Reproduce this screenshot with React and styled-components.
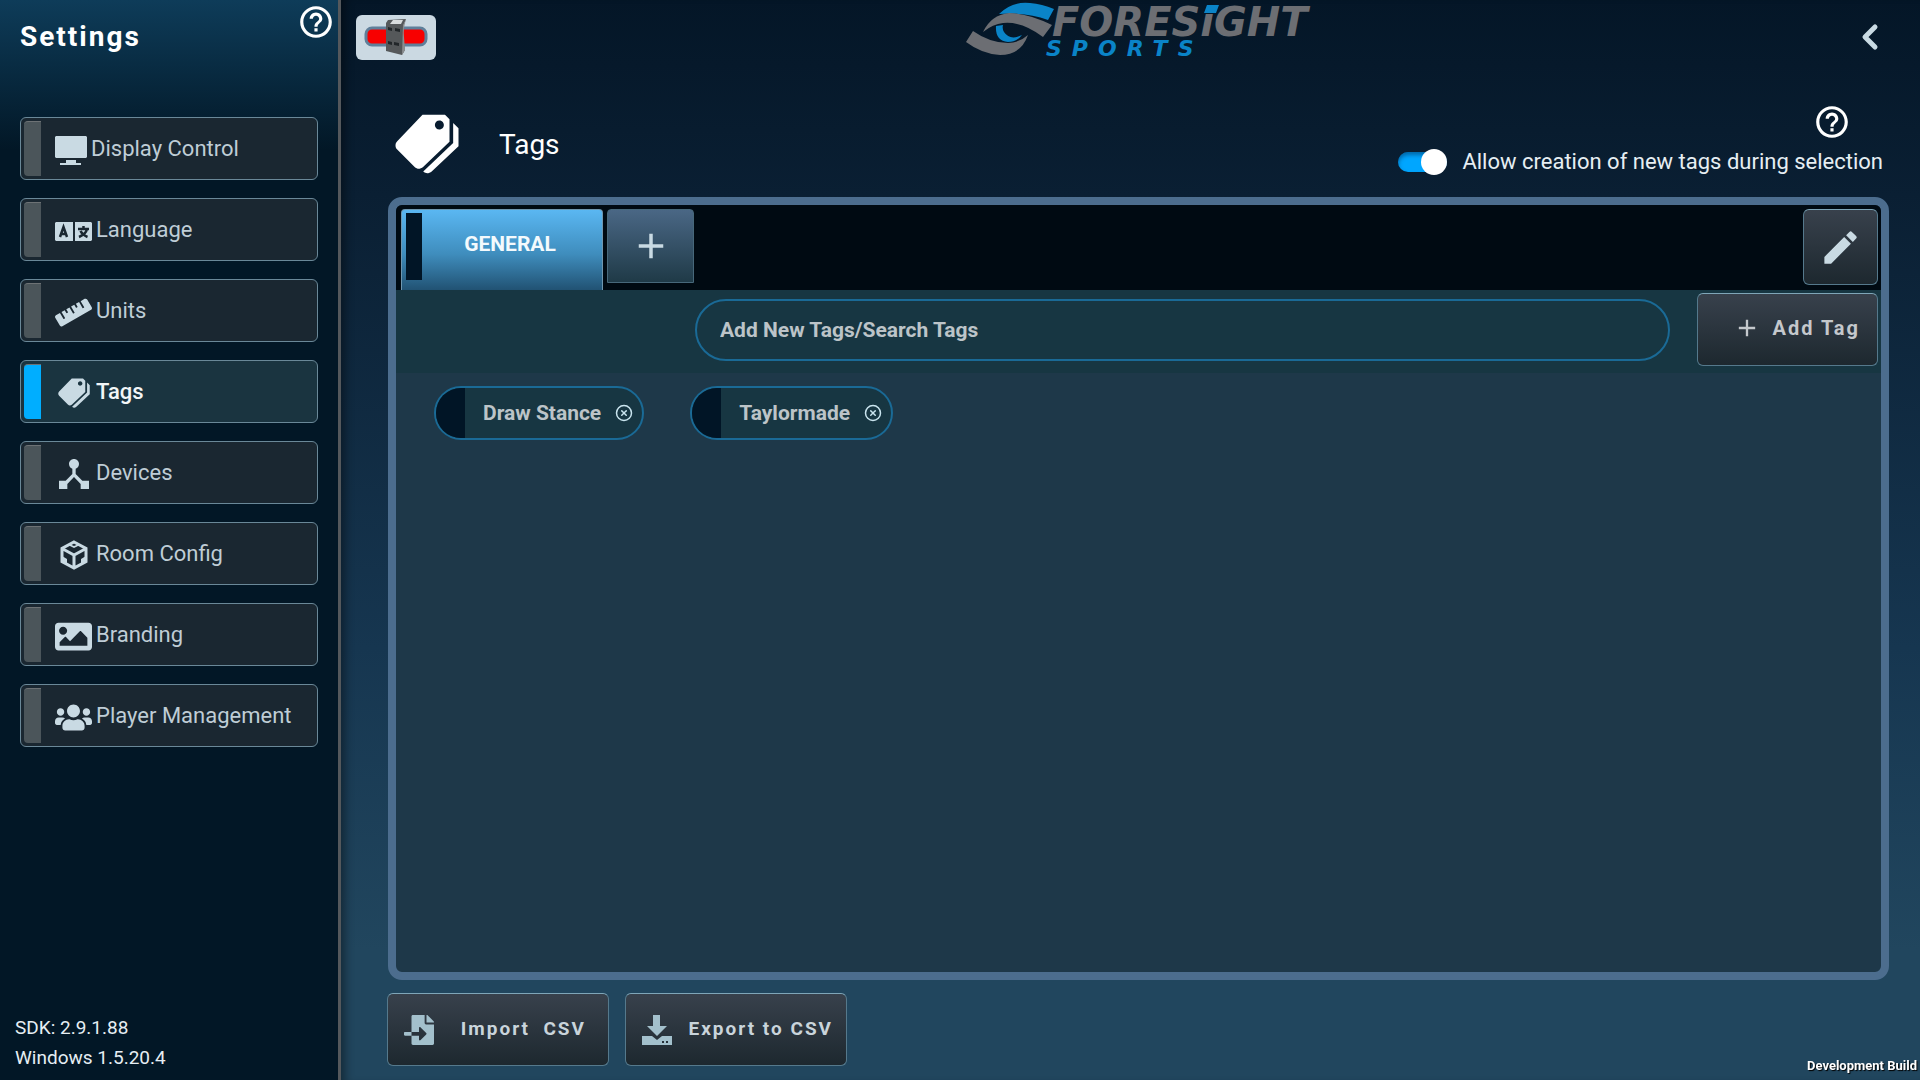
import { useState } from "react";
import styled, { createGlobalStyle, css } from "styled-components";
import { FaFileImport, FaImage, FaRuler, FaUsers } from "react-icons/fa";
import { IoMdPricetags } from "react-icons/io";
import { MdAdd, MdDeviceHub, MdEdit, MdHelpOutline } from "react-icons/md";
import { ChevronLeft, CircleX } from "lucide-react";

const GlobalStyle = createGlobalStyle`
  * {
    box-sizing: border-box;
  }

  body {
    margin: 0;
    font-family: Roboto, "Liberation Sans", sans-serif;
    color: #e6eef3;
    background: #041627;
  }

  button, input {
    font: inherit;
    color: inherit;
  }

  button {
    padding: 0;
    border: 0;
    background: none;
    cursor: pointer;
  }

  svg {
    display: block;
    flex: none;
  }
`

const Page = styled.div`
  display: flex;
  min-height: 100vh;
`

const Sidebar = styled.aside`
  display: flex;
  flex-direction: column;
  flex: none;
  width: 341px;
  padding: 0 20px 7px;
  border-right: 3px solid #54585c;
  background: linear-gradient(#0e3c59 0, #021726 150px, #021726 100%);
`

const SidebarHeader = styled.header`
  display: flex;
  justify-content: space-between;
  height: 117px;
  padding-top: 3px;
  margin-right: -17px;
`

const SidebarTitle = styled.h1`
  margin: 17px 0 0;
  font-size: 28px;
  line-height: 34px;
  letter-spacing: 2px;
  color: #fff;
`

const HelpButton = styled.button`
  align-self: flex-start;
  color: #fff;
`

const Menu = styled.nav`
  display: flex;
  flex-direction: column;
  gap: 18px;
`

const MenuItem = styled.a`
  display: flex;
  align-items: center;
  height: 63px;
  padding: 3px;
  border: 1px solid #6a8898;
  border-radius: 6px;
  background: ${({$active}) => $active ? "#1a3440" : "#1a2731"};
  color: ${({$active}) => $active ? "#f2f6f8" : "#bfcdd6"};
  font-size: 22px;
  font-weight: ${({$active}) => $active ? 500 : 400};
  text-decoration: none;

  &::before {
    content: "";
    align-self: stretch;
    width: 17px;
    margin-right: 14px;
    border-radius: 4px 0 0 4px;
    border-top: 1px solid #6d7275;
    background: ${({$active}) => $active ? "#00aeff" : "#4b555a"};
  }
`

const MenuIcon = styled.span`
  display: flex;
  justify-content: center;
  width: ${({$narrow}) => $narrow ? "32px" : "37px"};
  margin-right: 4px;
  padding-top: 3px;
  color: #c9dae3;
`

const Versions = styled.footer`
  margin: auto 0 0 -5px;
  font-size: 19px;
  line-height: 30px;
`

const Main = styled.main`
  display: flex;
  flex-direction: column;
  flex: 1;
  min-width: 0;
  background: linear-gradient(#041627 0, #0a1f33 18%, #163650 60%, #21465e 88%, #21465e 100%);
  box-shadow: inset 10px 0 10px -6px rgba(0, 0, 0, 0.4);
`

const TopBar = styled.header`
  display: grid;
  grid-template-columns: 1fr auto 1fr;
  align-items: start;
  height: 75px;
  padding: 0 30px 0 15px;
`

const DeviceButton = styled.button`
  width: 80px;
  height: 45px;
  margin-top: 15px;
  border-radius: 6px;
  background: #cbd9e2;
`

const LogoBox = styled.div`
  padding-left: 40px;
`

const BackButton = styled.button`
  justify-self: end;
  margin-top: 17px;
  color: #c9dae3;
`

const PageHeader = styled.div`
  display: flex;
  justify-content: space-between;
  height: 122px;
  padding: 0 37px 0 50px;
`

const PageTitle = styled.h2`
  display: flex;
  align-items: center;
  gap: 36px;
  height: 138px;
  margin: 0;
  font-size: 28px;
  font-weight: 400;
  color: #fff;
`

const HeaderTools = styled.div`
  display: flex;
  flex-direction: column;
  gap: 8px;
  padding-top: 28px;
`

const HelpSlot = styled.div`
  display: flex;
  justify-content: flex-end;
  padding-right: 32px;
`

const ToggleLabel = styled.label`
  display: flex;
  align-items: center;
  gap: 15px;
  font-size: 22px;
  line-height: 26px;
`

const Toggle = styled.input`
  appearance: none;
  display: flex;
  align-items: center;
  justify-content: ${({checked}) => checked ? "flex-end" : "flex-start"};
  width: 49px;
  height: 20px;
  margin: 0;
  border-radius: 10px;
  background: ${({checked}) => checked ? "#00a6ff" : "#4b555a"};
  box-shadow: inset 0 3px 4px rgba(0, 40, 80, 0.5);

  &::before {
    content: "";
    width: 26px;
    height: 26px;
    border-radius: 50%;
    background: #fff;
  }
`

const Panel = styled.section`
  display: flex;
  flex-direction: column;
  flex: 1;
  margin: 0 31px 0 47px;
  border: 8px solid #4c6d8e;
  border-radius: 14px;
  background: #1e3849;
  overflow: hidden;
`

const TabBar = styled.div`
  display: flex;
  gap: 4px;
  height: 85px;
  padding: 4px 3px 0 5px;
  background: #000a12;
`

const Tab = styled.button`
  display: flex;
  width: 202px;
  padding: 3px 4px 10px;
  border: 1px solid #6f97b0;
  border-bottom: 0;
  border-radius: 4px 4px 0 0;
  background: linear-gradient(#5ab7f2, #3f8dbd 55%, #215273);
  color: #f4fafd;
  font-size: 21px;
  font-weight: 700;

  &::before {
    content: "";
    align-self: stretch;
    width: 16px;
    background: #011526;
  }
`

const TabName = styled.span`
  flex: 1;
  align-self: center;
  padding-bottom: 6px;
`

const raised = css`
  display: flex;
  align-items: center;
  border: 1px solid #55798c;
  border-top-color: #7fa6b8;
  border-radius: 6px;
  background: linear-gradient(#38414c, #1d282f);
`

const NewTabButton = styled.button`
  display: flex;
  align-items: center;
  justify-content: center;
  width: 87px;
  height: 74px;
  border: 1px solid #47687a;
  border-radius: 4px 4px 0 0;
  background: linear-gradient(#4a6785, #1f3a47);
  color: #c9dae3;
`

const EditButton = styled.button`
  ${raised};
  justify-content: center;
  width: 75px;
  height: 76px;
  margin-left: auto;
  color: #c9dae3;
`

const SearchRow = styled.div`
  display: flex;
  align-items: flex-start;
  height: 83px;
  padding: 3px 3px 0 299px;
  background: #173642;
`

const SearchInput = styled.input`
  flex: 1;
  min-width: 0;
  height: 62px;
  margin: 6px 27px 0 0;
  padding: 0 23px;
  border: 2px solid #1a6a96;
  border-radius: 31px;
  outline: 0;
  background: transparent;
  font-size: 21px;
  font-weight: 700;

  &::placeholder {
    color: #bcc4c8;
    opacity: 1;
  }
`

const AddTagButton = styled.button`
  ${raised};
  justify-content: flex-end;
  gap: 12px;
  width: 181px;
  height: 73px;
  padding: 0 17px 3px 0;
  color: #c4c8cc;
  font-size: 20px;
  font-weight: 700;
  letter-spacing: 2px;
`

const TagList = styled.ul`
  display: flex;
  flex-wrap: wrap;
  gap: 46px;
  margin: 0;
  padding: 13px 38px;
  list-style: none;
`

const TagChip = styled.li`
  display: flex;
  align-items: center;
  height: 54px;
  padding-right: 9px;
  border: 2px solid #1a6a96;
  border-radius: 27px;
  background: #173642;
  color: #bcc4c8;
  font-size: 21px;
  font-weight: 700;
  overflow: hidden;

  &::before {
    content: "";
    align-self: stretch;
    width: 29px;
    margin-right: 18px;
    background: #011526;
  }
`

const RemoveButton = styled.button`
  margin-left: 14px;
  color: #c9e4ee;
`

const Actions = styled.footer`
  display: flex;
  gap: 16px;
  height: 100px;
  padding: 13px 0 0 46px;
`

const ActionButton = styled.button`
  ${raised};
  width: 222px;
  height: 73px;
  padding: 0 ${({$inset}) => $inset ? "22px" : "13px"} 0 16px;
  font-size: 19px;
  font-weight: 700;
  letter-spacing: 2px;
  white-space: pre;
  color: #c9d4db;

  svg {
    color: #a3c0cc;
  }
`

const ActionName = styled.span`
  flex: 1;
  padding-bottom: 3px;
  text-align: right;
`

const BuildLabel = styled.div`
  position: fixed;
  right: 3px;
  bottom: 5px;
  color: #fff;
  font-size: 13px;
  font-weight: 700;
  line-height: 18px;
  text-shadow: 1px 1px 1px #000;
`

function MonitorIcon() {
    return (
        <svg width="32" height="29" viewBox="0 0 32 29" fill="currentColor" aria-hidden="true">
            <path d="M1 0h30l1 1v20l-1 1H1l-1-1V1zM11 24h10v3h5v2H5v-2h6z"/>
        </svg>
    )
}

function LanguageIcon() {
    return (
        <svg width="37" height="19" viewBox="0 0 37 19" aria-hidden="true">
            <path fill="currentColor" d="M1 0h17v19H1l-1-1V1zM20 0h16l1 1v17l-1 1H20z"/>
            <g fill="none" stroke="#1a2731" strokeWidth="2.500">
                <path d="M5 15L8.500 5L12 15M6 12h5"/>
                <path d="M23 7h11M28.500 4v3M32 7q-1 5-8 8M25.500 9q2 4 7 6"/>
            </g>
        </svg>
    )
}

function CubeIcon() {
    return (
        <svg width="28" height="30" viewBox="0 0 28 30" fill="none" stroke="currentColor" strokeWidth="3" aria-hidden="true">
            <path d="M14 2L26 8.500V21.500L14 28L2 21.500V8.500zM2 8.500L14 15L26 8.500M14 15V28"/>
            <path fill="currentColor" stroke="none" d="M9 4L14 6L19 4L20 5L14 8L8 5zM2 16l5 3v6l-5-3zM26 16l-5 3v6l5-3z"/>
        </svg>
    )
}

function ExportIcon() {
    return (
        <svg width="30" height="30" viewBox="0 0 30 30" fill="currentColor" aria-hidden="true">
            <path d="M11 0h7v11h7L15 21L5 11h6z"/>
            <path fillRule="evenodd" d="M0 21h10l5 4l5-4h10v9H0zM20 26v2h2v-2zM24 26v2h2v-2z"/>
        </svg>
    )
}

function LaunchMonitorIcon() {
    return (
        <svg width="80" height="45" viewBox="0 0 80 45" aria-hidden="true">
            <rect x="10" y="13" width="60" height="17" rx="6" fill="#f80000" stroke="#5f7f9a" strokeWidth="3"/>
            <path d="M32 5L50 4Q46 13 47 22L49 35L46 40L30 36V8z" fill="#55585a"/>
            <path d="M47 10L50 4Q47 14 48 22L49 35L46 40z" fill="#8b8e90"/>
            <path d="M37 5L47 5L45 9L34 9z" fill="#d9dcdd"/>
            <path d="M32 12l4 1v3l-4-1zM39 13l5 1v3l-5-1zM32 26l4 1v3l-4-1zM38 27l5 1v3l-5-1z" fill="#222629"/>
        </svg>
    )
}

function Logo() {
    return (
        <svg width="354" height="60" viewBox="0 0 354 60" role="img" aria-label="Foresight Sports">
            <path d="M33 14Q46 1 64 3Q76 4 88 9L82 20Q60 12 33 14z" fill="#0a84c8"/>
            <path d="M17 32Q25 15 43 13Q62 13 86 25L77 37Q56 21 37 23Q27 24 17 32z" fill="#6c6e73"/>
            <path d="M0 42L7 31Q24 43 42 43Q53 43 62 35Q55 55 34 55Q16 54 0 42z" fill="#6c6e73"/>
            <path d="M30 26Q29 41 42 42Q51 42 56 35Q44 41 38 32Q36 29 37 25z" fill="#0a84c8"/>
            <text x="86" y="36" fill="#6c6e73" fontFamily="DejaVu Sans" fontSize="40" fontWeight="700" fontStyle="italic">FORESiGHT</text>
            <path d="M241 5h12l-3 8h-12z" fill="#0a84c8"/>
            <text x="80" y="56" fill="#0a84c8" fontFamily="DejaVu Sans" fontSize="22" fontWeight="700" fontStyle="italic" letterSpacing="10">SPORTS</text>
        </svg>
    )
}

const MENU = [
    {name: "Display Control", icon: <MonitorIcon/>, narrow: true},
    {name: "Language", icon: <LanguageIcon/>},
    {name: "Units", icon: <FaRuler size={37}/>},
    {name: "Tags", icon: <IoMdPricetags size={36}/>},
    {name: "Devices", icon: <MdDeviceHub size={40}/>},
    {name: "Room Config", icon: <CubeIcon/>},
    {name: "Branding", icon: <FaImage size={37}/>},
    {name: "Player Management", icon: <FaUsers size={37}/>},
]

function App() {
    const [allowNew, setAllowNew] = useState(true)
    const [tags, setTags] = useState(["Draw Stance", "Taylormade"])
    const [query, setQuery] = useState("")

    const addTag = () => {
        if (query && !tags.includes(query)) setTags([...tags, query])
        setQuery("")
    }

    return (
        <Page>
            <GlobalStyle/>
            <Sidebar>
                <SidebarHeader>
                    <SidebarTitle>Settings</SidebarTitle>
                    <HelpButton aria-label="Settings help"><MdHelpOutline size={38}/></HelpButton>
                </SidebarHeader>
                <Menu>
                    {MENU.map(({name, icon, narrow}) => (
                        <MenuItem key={name} href="#" $active={name === "Tags"}>
                            <MenuIcon $narrow={narrow}>{icon}</MenuIcon>
                            {name}
                        </MenuItem>
                    ))}
                </Menu>
                <Versions>
                    <div>SDK: 2.9.1.88</div>
                    <div>Windows 1.5.20.4</div>
                </Versions>
            </Sidebar>
            <Main>
                <TopBar>
                    <DeviceButton aria-label="Launch monitor"><LaunchMonitorIcon/></DeviceButton>
                    <LogoBox><Logo/></LogoBox>
                    <BackButton aria-label="Back"><ChevronLeft size={40} strokeWidth={3}/></BackButton>
                </TopBar>
                <PageHeader>
                    <PageTitle><IoMdPricetags size={72}/>Tags</PageTitle>
                    <HeaderTools>
                        <HelpSlot>
                            <HelpButton aria-label="Tags help"><MdHelpOutline size={38}/></HelpButton>
                        </HelpSlot>
                        <ToggleLabel>
                            <Toggle type="checkbox" checked={allowNew} onChange={(e) => setAllowNew(e.target.checked)}/>
                            Allow creation of new tags during selection
                        </ToggleLabel>
                    </HeaderTools>
                </PageHeader>
                <Panel>
                    <TabBar>
                        <Tab><TabName>GENERAL</TabName></Tab>
                        <NewTabButton aria-label="New tab"><MdAdd size={42}/></NewTabButton>
                        <EditButton aria-label="Edit"><MdEdit size={43}/></EditButton>
                    </TabBar>
                    <SearchRow>
                        <SearchInput
                            aria-label="Add or search tags"
                            placeholder="Add New Tags/Search Tags"
                            value={query}
                            onChange={(e) => setQuery(e.target.value)}
                        />
                        <AddTagButton onClick={addTag}><MdAdd size={28}/>Add Tag</AddTagButton>
                    </SearchRow>
                    <TagList>
                        {tags.map((tag) => (
                            <TagChip key={tag}>
                                {tag}
                                <RemoveButton aria-label={`Remove ${tag}`} onClick={() => setTags(tags.filter((t) => t !== tag))}>
                                    <CircleX size={18} strokeWidth={2}/>
                                </RemoveButton>
                            </TagChip>
                        ))}
                    </TagList>
                </Panel>
                <Actions>
                    <ActionButton $inset><FaFileImport size={30}/><ActionName>Import  CSV</ActionName></ActionButton>
                    <ActionButton><ExportIcon/><ActionName>Export to CSV</ActionName></ActionButton>
                </Actions>
            </Main>
            <BuildLabel>Development Build</BuildLabel>
        </Page>
    )
}

export default App
